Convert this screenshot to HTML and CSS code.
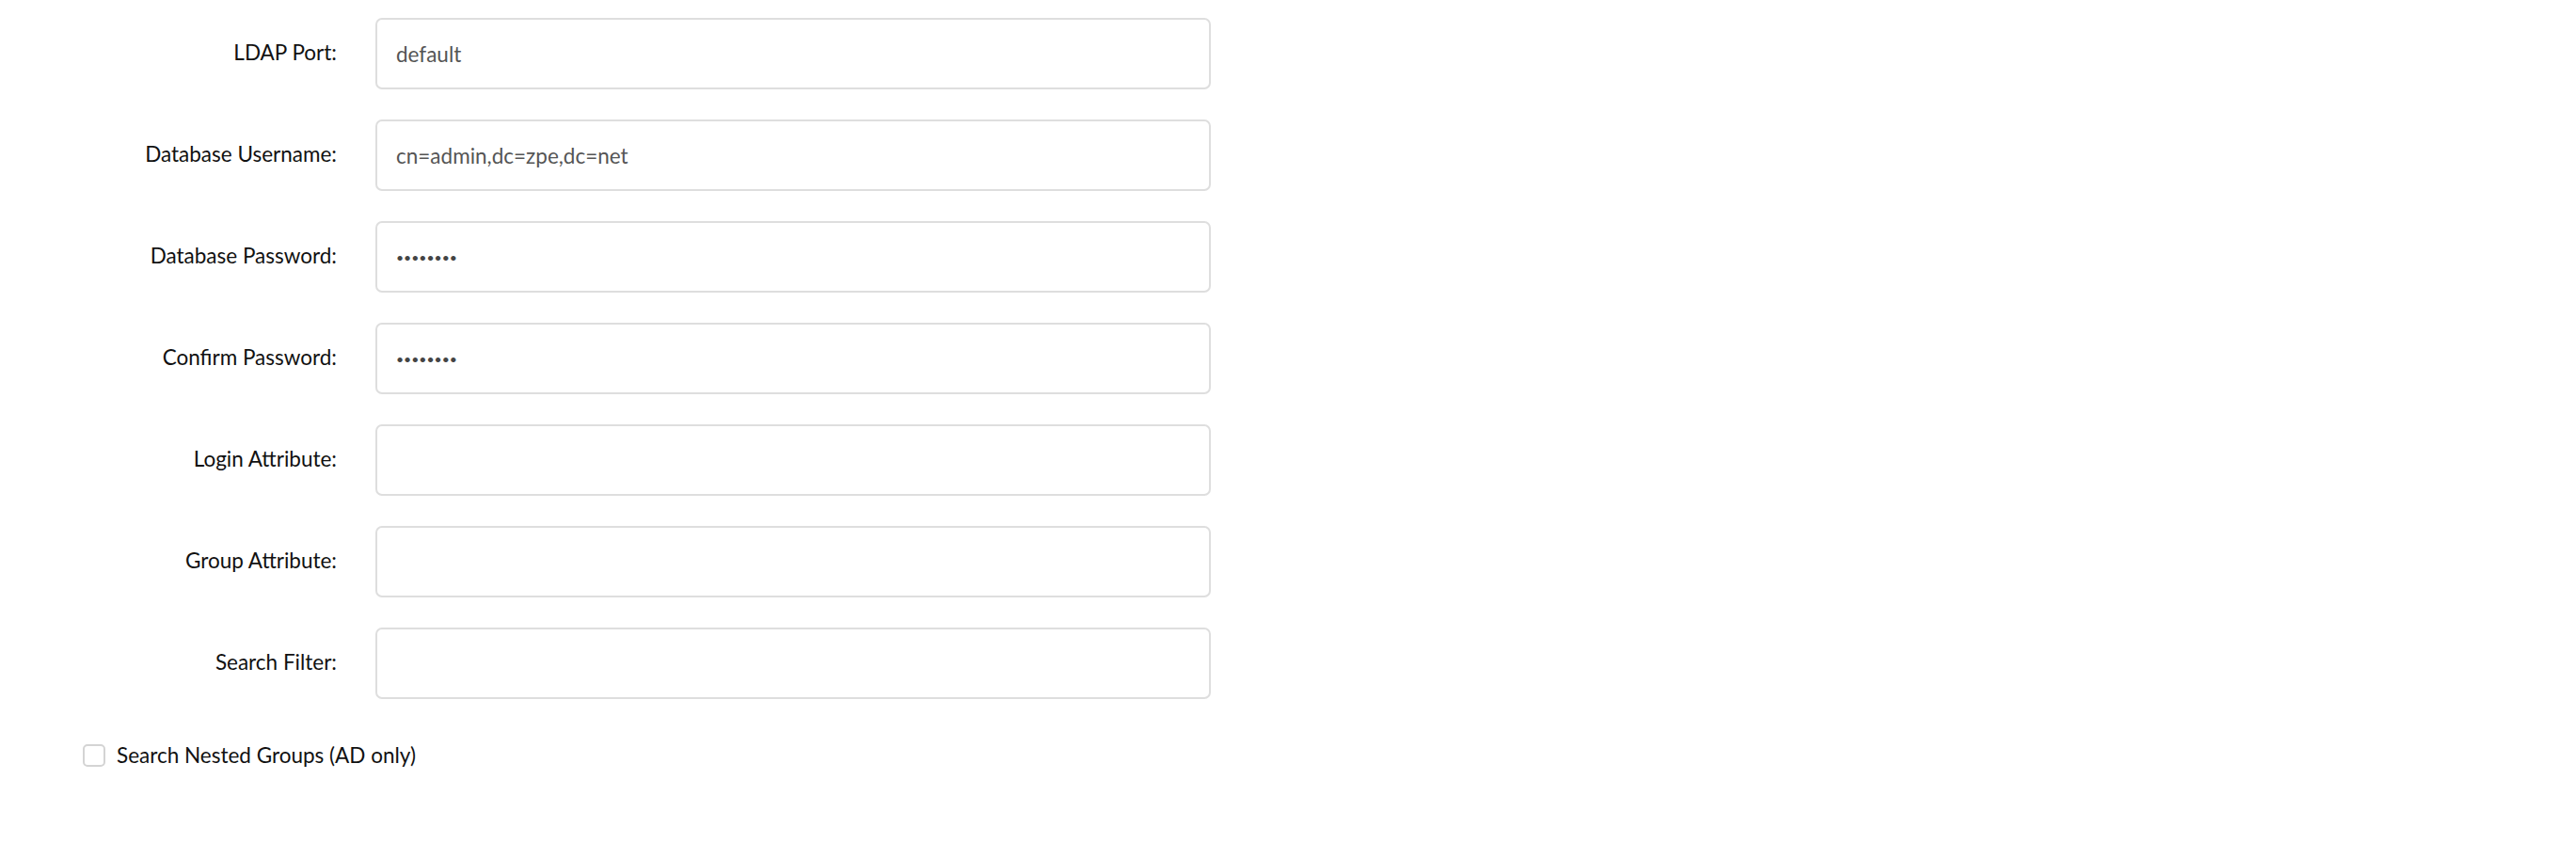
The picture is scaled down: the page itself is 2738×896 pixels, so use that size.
FILE: index.html
```html
<!DOCTYPE html>
<html lang="en">
<head>
    <meta charset="UTF-8">
    <meta name="viewport" content="width=device-width, initial-scale=1.0">
    <title>LDAP Settings</title>
    <link rel="stylesheet" href="styles.css">
</head>
<body>
    <form class="settings-form">
        <div class="form-row">
            <label for="ldap-port">LDAP Port:</label>
            <input type="text" id="ldap-port" value="default">
        </div>
        <div class="form-row">
            <label for="db-user">Database Username:</label>
            <input type="text" id="db-user" value="cn=admin,dc=zpe,dc=net">
        </div>
        <div class="form-row">
            <label for="db-pass">Database Password:</label>
            <input type="password" id="db-pass" value="password">
        </div>
        <div class="form-row">
            <label for="db-pass2">Confirm Password:</label>
            <input type="password" id="db-pass2" value="password">
        </div>
        <div class="form-row">
            <label for="login-attr">Login Attribute:</label>
            <input type="text" id="login-attr">
        </div>
        <div class="form-row">
            <label for="group-attr">Group Attribute:</label>
            <input type="text" id="group-attr">
        </div>
        <div class="form-row">
            <label for="search-filter">Search Filter:</label>
            <input type="text" id="search-filter">
        </div>

        <label class="check-row">
            <input type="checkbox" id="nested-groups">
            <span>Search Nested Groups (AD only)</span>
        </label>
    </form>
</body>
</html>
```

FILE: styles.css
```css
body {
    margin: 0;
    background: #fff;
    font-family: Lato, "Open Sans", sans-serif;
    color: #111;
}
.settings-form {
    padding-top: 19px;
    display: flex;
    flex-direction: column;
    gap: 32px;
}
.form-row {
    display: grid;
    grid-template-columns: 358px 888px;
    column-gap: 41px;
    align-items: center;
}
.form-row label {
    text-align: right;
    font-size: 22.5px;
    margin-top: -4px;
}
.form-row input {
    box-sizing: border-box;
    height: 76px;
    width: 100%;
    padding: 0 20px;
    border: 2px solid #dedede;
    border-radius: 7px;
    font-family: inherit;
    font-size: 22.5px;
    color: #555;
    outline: none;
}
.form-row input[type="password"] {
    font-size: 14px;
    color: #444;
}
.check-row {
    display: flex;
    align-items: center;
    gap: 12px;
    margin-left: 88px;
    margin-top: 14px;
    font-size: 22.5px;
}
.check-row input {
    appearance: none;
    width: 24px;
    height: 24px;
    margin: 0;
    border: 2px solid #d4d4d4;
    border-radius: 5px;
    background: #fff;
}
```
